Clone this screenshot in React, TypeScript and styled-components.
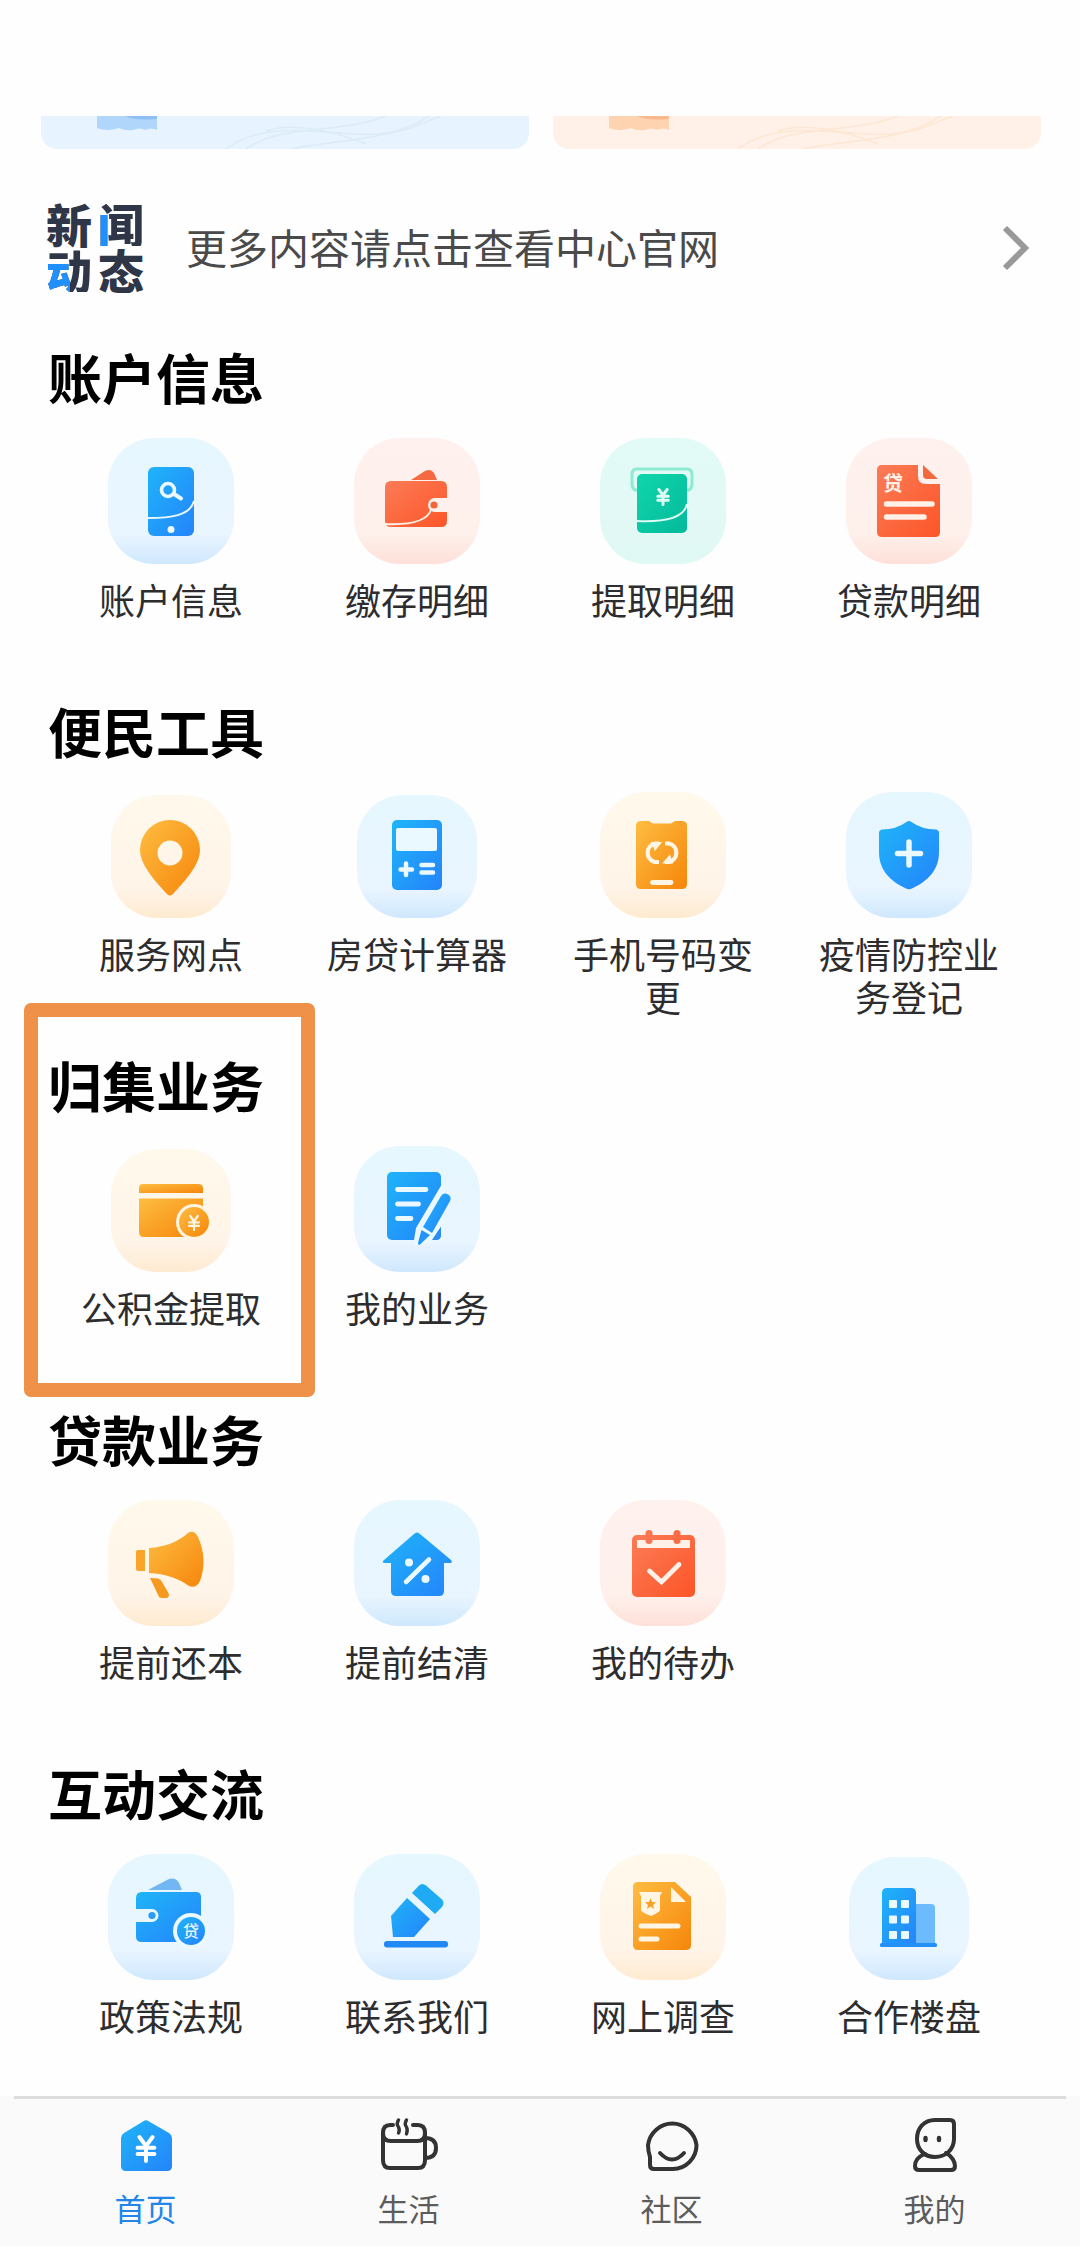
import React from 'react';
import styled, { createGlobalStyle } from 'styled-components';

const GlobalStyle = createGlobalStyle`
  *, *::before, *::after { box-sizing: border-box; }
  body {
    margin: 0;
    background: #fefefe;
    color: #2d2d2f;
    font-family: "Noto Sans CJK SC", "Noto Sans", sans-serif;
  }
  h2 { margin: 0; }
  a { color: inherit; text-decoration: none; }
`;

type Tone = 'blue' | 'red' | 'green' | 'orange';

const tileBackground: Record<Tone, string> = {
  blue: 'linear-gradient(180deg, #e6f7fe 0%, #e9f5ff 76%, #cfe8fd 100%)',
  red: 'linear-gradient(180deg, #fff1ee 0%, #fef0eb 76%, #fee0d9 100%)',
  green: 'linear-gradient(180deg, #e2fbf7 0%, #e2f8f5 76%, #dff9f4 100%)',
  orange: 'linear-gradient(180deg, #fff9ec 0%, #fff4e8 76%, #feead0 100%)',
};

const tileInk: Record<Tone, string> = {
  blue: '#eaf8ff',
  red: '#fff0e8',
  green: '#defbf5',
  orange: '#fff5e4',
};

const Page = styled.div`
  display: flex;
  flex-direction: column;
  min-height: 100vh;
  padding-top: 116px;
`;

const Banners = styled.div`
  display: grid;
  grid-template-columns: 1fr 1fr;
  gap: 24px;
  padding: 0 39px 0 41px;
`;

const Banner = styled.a<{ $tone: 'blue' | 'orange' }>`
  display: block;
  height: 33px;
  overflow: hidden;
  border-radius: 0 0 16px 16px;
  background: ${({ $tone }) => ($tone === 'blue' ? '#e7f3fe' : '#fff1e7')};
  svg { display: block; }
`;

const NewsRow = styled.a`
  display: flex;
  align-items: center;
  gap: 38px;
  padding: 51px 50px 51px 46px;
`;

const NewsLogo = styled.span`
  display: grid;
  grid-template-columns: 52px 50px;
  padding-bottom: 4px;
  font-size: 46px;
  line-height: 46px;
  font-weight: 900;
  color: #2f3648;
`;

const TwoTone = styled.span<{ $width: string; $height: string }>`
  color: transparent;
  background:
    linear-gradient(#2090ff, #2090ff) 0 100% / ${({ $width }) => $width} ${({ $height }) => $height} no-repeat,
    #2f3648;
  background-clip: text;
  -webkit-background-clip: text;
`;

const NewsText = styled.span`
  flex: 1;
  padding-bottom: 4px;
  font-size: 41px;
  line-height: 56px;
  color: #4a4a4a;
`;

const Main = styled.main`
  flex: 1;
`;

const Section = styled.section`
  position: relative;
  padding-bottom: 37px;
  &:last-child { padding-bottom: 10px; }
`;

const SectionTitle = styled.h2`
  padding: 0 48px;
  font-size: 54px;
  line-height: 60px;
  font-weight: 700;
  color: #000;
`;

const Grid = styled.div`
  display: grid;
  grid-template-columns: repeat(4, 1fr);
  padding: 31px 48px 0;
`;

const Item = styled.a`
  display: flex;
  flex-direction: column;
  align-items: center;
  gap: 14px;
  padding: 0 28px;
`;

const TileSlot = styled.span`
  display: flex;
  align-items: flex-end;
  justify-content: center;
  width: 126px;
  height: 126px;
`;

const Tile = styled.span<{ $tone: Tone; $small?: boolean }>`
  display: flex;
  align-items: flex-end;
  justify-content: center;
  width: ${({ $small }) => ($small ? 120 : 126)}px;
  height: ${({ $small }) => ($small ? 123 : 126)}px;
  border-radius: 46px;
  background: ${({ $tone }) => tileBackground[$tone]};
  svg { flex: none; display: block; }
`;

const Label = styled.span`
  min-height: 86px;
  font-size: 36px;
  line-height: 43px;
  text-align: center;
`;

const Highlight = styled.div`
  position: absolute;
  top: -52px;
  bottom: 12px;
  left: 24px;
  width: 291px;
  border: 14px solid #f0914a;
  border-radius: 7px;
  pointer-events: none;
`;

const TabBar = styled.nav`
  display: grid;
  grid-template-columns: repeat(4, 1fr);
  padding: 0 14px;
  background: #fafafa;
`;

const TabRule = styled.div`
  height: 3px;
  grid-column: 1 / -1;
  background: #dcdcdc;
  margin: 0 0 17px;
`;

const Tab = styled.a<{ $active?: boolean }>`
  display: flex;
  flex-direction: column;
  align-items: center;
  gap: 12px;
  padding-bottom: 18px;
  font-size: 31px;
  line-height: 40px;
  color: ${({ $active }) => ($active ? '#2186e8' : '#5c5c5c')};
  svg { display: block; }
`;

const HiddenDefs = styled.svg`
  position: absolute;
`;

const Gradients = () => (
  <HiddenDefs width="0" height="0" aria-hidden="true">
    <defs>
      <linearGradient id="blue" x1="0" y1="0" x2="1" y2="1">
        <stop offset="0" stopColor="#1fb4f8" />
        <stop offset="1" stopColor="#2484fb" />
      </linearGradient>
      <linearGradient id="red" x1="0" y1="0" x2="1" y2="1">
        <stop offset="0" stopColor="#fb7c57" />
        <stop offset="1" stopColor="#fd5527" />
      </linearGradient>
      <linearGradient id="green" x1="0" y1="0" x2="1" y2="1">
        <stop offset="0" stopColor="#10d6ac" />
        <stop offset="1" stopColor="#04b99a" />
      </linearGradient>
      <linearGradient id="orange" x1="0" y1="0" x2="1" y2="1">
        <stop offset="0" stopColor="#fdbd42" />
        <stop offset="1" stopColor="#f6860a" />
      </linearGradient>
    </defs>
  </HiddenDefs>
);

const Glyph = ({ x, y, size, fill, weight = 700, children }: {
  x: number; y: number; size: number; fill: string; weight?: number; children: string;
}) => (
  <text
    x={x} y={y} fontSize={size} fill={fill} fontWeight={weight} textAnchor="middle"
    fontFamily='"Noto Sans CJK SC", sans-serif'
  >
    {children}
  </text>
);

/* ¥ sign drawn with strokes, centred on (x, y) */
const Yen = ({ x, y, s, color, w }: { x: number; y: number; s: number; color: string; w: number }) => (
  <path
    transform={`translate(${x} ${y})`}
    d={`M${-s * 0.55} ${-s} L0 ${-s * 0.25} L${s * 0.55} ${-s} M0 ${-s * 0.25} V${s} M${-s * 0.7} ${-s * 0.1} H${s * 0.7} M${-s * 0.7} ${s * 0.42} H${s * 0.7}`}
    fill="none" stroke={color} strokeWidth={w} strokeLinecap="round" strokeLinejoin="round"
  />
);

const B = tileInk.blue;
const R = tileInk.red;
const G = tileInk.green;
const O = tileInk.orange;

const art = {
  phoneSearch: (
    <>
      <rect x="40" y="29" width="46" height="69" rx="6" fill="url(#blue)" />
      <path d="M40 80 C62 80 82 78 86 63" fill="none" stroke={B} strokeWidth="2" />
      <circle cx="60" cy="52" r="6.5" fill="none" stroke={B} strokeWidth="3.6" />
      <path d="M66 56 L73 60.500" stroke={B} strokeWidth="4" strokeLinecap="round" />
      <circle cx="63" cy="91.500" r="3.5" fill={B} />
    </>
  ),
  wallet: (
    <>
      <path d="M57 42 L71 33 Q77 30 80 35 L83 42 Z" fill="#f4693f" />
      <path d="M37 43 H87 Q93 43 93 49 V60 H81 A7 7 0 0 0 81 74 H93 V83 Q93 89 87 89 H37 Q31 89 31 83 V49 Q31 43 37 43 Z" fill="url(#red)" />
      <path d="M31 86 C52 87 72 85 77 72" fill="none" stroke={R} strokeWidth="2" />
      <circle cx="80" cy="67" r="3.6" fill="#f4653a" />
    </>
  ),
  withdraw: (
    <>
      <path d="M37 52 H35 Q32 50 32 46 V36 Q32 31 37 31 H87 Q92 31 92 36 V46 Q92 50 89 52 H87" fill="none" stroke="#8cebd2" strokeWidth="3" />
      <rect x="37" y="36" width="50" height="59" rx="5" fill="url(#green)" />
      <path d="M37 83 C60 84 84 82 87 66" fill="none" stroke={G} strokeWidth="2" />
      <Yen x={63} y={59} s={7.5} color={G} w={3} />
    </>
  ),
  loanDoc: (
    <>
      <path d="M36 27 H72 V38 Q72 46 80 46 H94 V94 Q94 99 89 99 H36 Q31 99 31 94 V32 Q31 27 36 27 Z" fill="url(#red)" />
      <path d="M77 27 L92 41 H81 Q77 41 77 37 Z" fill="#f4683e" />
      <Glyph x={47} y={53} size={20} fill={R}>贷</Glyph>
      <path d="M40.500 66 H86 M40.500 79 H78" stroke={R} strokeWidth="5.5" strokeLinecap="round" />
    </>
  ),
  pin: (
    <path fillRule="evenodd" d="M62 28 A30 30 0 0 1 92 58 C92 74 74 92 65 102 Q62 105 59 102 C50 92 32 74 32 58 A30 30 0 0 1 62 28 Z M62 48.500 A12.500 12.500 0 1 0 62 73.500 A12.500 12.500 0 1 0 62 48.500 Z" fill="url(#orange)" />
  ),
  calculator: (
    <>
      <rect x="38" y="28" width="50" height="70" rx="5" fill="url(#blue)" />
      <rect x="42" y="36" width="41" height="23" rx="2" fill={B} />
      <path d="M46.500 77.500 H58 M52 71.500 V83 M67.500 73 H79 M67.500 80.500 H79" stroke={B} strokeWidth="4.500" strokeLinecap="round" />
    </>
  ),
  phoneSwap: (
    <>
      <path d="M41 29 H49 L53 31.500 H71 L75 29 H82 Q87 29 87 34 V92 Q87 97 82 97 H41 Q36 97 36 92 V34 Q36 29 41 29 Z" fill="url(#orange)" />
      <path d="M59 51.500 H55 A9.500 9.500 0 0 0 55 70 H59 M65 51.500 H69 A9.500 9.500 0 0 1 69 70 H65" fill="none" stroke={O} strokeWidth="4.200" />
      <path d="M51 50 H62 L55 59 Z M73 71.500 H62 L70 62.500 Z" fill={O} />
      <path d="M52.500 90.500 H71" stroke={O} strokeWidth="4.800" strokeLinecap="round" />
    </>
  ),
  shield: (
    <>
      <path d="M60.500 30 Q63 28 65.500 30 Q76 37.500 90 37.500 Q93 38 93 41 V60 C93 78 82 89 66 96.500 Q63 98 60 96.500 C44 89 33 78 33 60 V41 Q33 38 36 37.500 Q50 37.500 60.500 30 Z" fill="url(#blue)" />
      <path d="M51.500 61.500 H74.500 M63 50 V73" stroke={B} strokeWidth="5.500" strokeLinecap="round" />
    </>
  ),
  fundCard: (
    <>
      <path d="M35 38 H90 Q95 38 95 42 V47 H31 V42 Q31 38 35 38 Z" fill="url(#orange)" />
      <path d="M31 52.500 H95 V86 Q95 91 90 91 H36 Q31 91 31 86 Z" fill="url(#orange)" />
      <circle cx="86" cy="76" r="18" fill={O} />
      <circle cx="86" cy="76" r="15" fill="url(#orange)" />
      <Yen x={86} y={77} s={7} color={O} w={2.2} />
    </>
  ),
  myDoc: (
    <>
      <rect x="33" y="26" width="54" height="68" rx="5" fill="url(#blue)" />
      <path d="M43.500 43.500 H72 M43.500 58 H64.500 M43.500 72.500 H57" stroke={B} strokeWidth="4.800" strokeLinecap="round" />
      <path d="M88 38 L62 82 L59 100 L76 97 L90 76 V38 Z" fill={B} />
      <path d="M87 82 V89 Q87 94 82 94 H79 Z" fill="#2b8df0" />
      <path d="M87 50 Q90 46 94 48.500 Q98 51 96 55 L78 87 L69 81 Z" fill="url(#blue)" />
      <path d="M67.500 84 L76 89 L65.500 99 Q64 99 64 97 Z" fill="#2294f9" />
    </>
  ),
  megaphone: (
    <>
      <path d="M30 50 H37 V71 H30 Q28 71 28 69 V52 Q28 50 30 50 Z" fill="#f9a52a" />
      <path d="M41 48 C58 47 71 41 80 33 Q86 29 90 37 C97 52 97 68 92 81 Q88 89 81 86 C70 78 58 74 41 73 Z" fill="url(#orange)" />
      <path d="M42 78 L50 78.500 Q53 79 54 82 L61 94 Q61 98 58 98 H54 Q51 98 50 95 Q46 86 42 78 Z" fill="#f59a1f" />
    </>
  ),
  housePercent: (
    <>
      <path d="M60 34 Q63 31 66 34 L97 60 Q99 63 96 63 H90 V91 Q90 96 85 96 H42 Q37 96 37 91 V63 H31 Q27 63 30 60 Z" fill="url(#blue)" />
      <circle cx="55" cy="62.500" r="4" fill={B} />
      <circle cx="71.500" cy="79" r="4" fill={B} />
      <path d="M75 59.500 L52 82" stroke={B} strokeWidth="4.600" strokeLinecap="round" />
    </>
  ),
  calendar: (
    <>
      <rect x="32" y="35" width="63" height="62" rx="5" fill="url(#red)" />
      <rect x="37" y="40" width="53" height="8" fill={R} />
      <rect x="45.500" y="30" width="7" height="14" rx="3.500" fill="#fa7550" />
      <rect x="73.500" y="30" width="7" height="14" rx="3.500" fill="#f96c45" />
      <path d="M49.500 71 L61.500 82 L79 64.500" fill="none" stroke={R} strokeWidth="4.800" strokeLinecap="round" />
    </>
  ),
  walletLoan: (
    <>
      <path d="M40 36 L59 26 Q67 22 71 29 L74 36 Z" fill="#72b6f4" />
      <path d="M34 38 H88 Q93 38 93 43 V83 Q93 88 88 88 H34 Q28 88 28 83 V68 H44 A6.500 6.500 0 0 0 44 55 H28 V44 Q28 38 34 38 Z" fill="url(#blue)" />
      <circle cx="44" cy="61.500" r="3.600" fill="#2a9df8" />
      <circle cx="83" cy="77" r="18" fill={B} />
      <circle cx="83" cy="77" r="14" fill="url(#blue)" />
      <Glyph x={83} y={82.500} size={16} fill={B} weight={500}>贷</Glyph>
    </>
  ),
  editPen: (
    <>
      <path d="M58 39 L65 31.500 Q68 28.500 72 31.500 L88 45.500 Q91 49 88 53 L81 60 Z" fill="#1eabf4" />
      <path d="M53 44 L76 65 L60 83 H39 L37 62 Z" fill="url(#blue)" />
      <rect x="30" y="87" width="64" height="6.500" rx="3" fill="#2189f3" />
    </>
  ),
  survey: (
    <>
      <path d="M38 28 H75 L91 43 V91 Q91 96 86 96 H38 Q33 96 33 91 V33 Q33 28 38 28 Z" fill="url(#orange)" />
      <path d="M71 33 L86 48 H71 Z" fill={O} />
      <path d="M39 38 H62 L60 42 V56 Q60 58 51 62 Q41 58 41 56 V42 Z" fill={O} />
      <path d="M50.500 44 L52 48 L56 48.200 L53 51 L54 55 L50.500 52.500 L47 55 L48 51 L45 48.200 L49 48 Z" fill="#f7a127" />
      <path d="M41 72 H78 M41 85 H57" stroke={O} strokeWidth="5" strokeLinecap="round" />
    </>
  ),
  building: (
    <>
      <path d="M70 50 H85 Q89 50 89 54 V90 H70 Z" fill="#6cbcfd" />
      <path d="M41 34 H65 Q70 34 70 39 V90 H36 V39 Q36 34 41 34 Z" fill="url(#blue)" />
      {[46, 61.500, 77].map((y) =>
        [43, 55].map((x) => <rect key={`${x}-${y}`} x={x} y={y} width="8" height="8" rx="1" fill={B} />),
      )}
      <rect x="34" y="89" width="57" height="4" rx="1.500" fill="#2490fb" />
    </>
  ),
};

interface Entry {
  label: string;
  tone: Tone;
  icon: keyof typeof art;
  small?: boolean;
}

const sections: { title: string; highlighted?: boolean; items: Entry[] }[] = [
  {
    title: '账户信息',
    items: [
      { label: '账户信息', tone: 'blue', icon: 'phoneSearch' },
      { label: '缴存明细', tone: 'red', icon: 'wallet' },
      { label: '提取明细', tone: 'green', icon: 'withdraw' },
      { label: '贷款明细', tone: 'red', icon: 'loanDoc' },
    ],
  },
  {
    title: '便民工具',
    items: [
      { label: '服务网点', tone: 'orange', icon: 'pin', small: true },
      { label: '房贷计算器', tone: 'blue', icon: 'calculator', small: true },
      { label: '手机号码变更', tone: 'orange', icon: 'phoneSwap' },
      { label: '疫情防控业务登记', tone: 'blue', icon: 'shield' },
    ],
  },
  {
    title: '归集业务',
    highlighted: true,
    items: [
      { label: '公积金提取', tone: 'orange', icon: 'fundCard', small: true },
      { label: '我的业务', tone: 'blue', icon: 'myDoc' },
    ],
  },
  {
    title: '贷款业务',
    items: [
      { label: '提前还本', tone: 'orange', icon: 'megaphone' },
      { label: '提前结清', tone: 'blue', icon: 'housePercent' },
      { label: '我的待办', tone: 'red', icon: 'calendar' },
    ],
  },
  {
    title: '互动交流',
    items: [
      { label: '政策法规', tone: 'blue', icon: 'walletLoan' },
      { label: '联系我们', tone: 'blue', icon: 'editPen' },
      { label: '网上调查', tone: 'orange', icon: 'survey' },
      { label: '合作楼盘', tone: 'blue', icon: 'building', small: true },
    ],
  },
];

const line = {
  fill: 'none',
  stroke: '#333',
  strokeWidth: 4,
  strokeLinecap: 'round' as const,
  strokeLinejoin: 'round' as const,
};

const tabs = [
  {
    label: '首页',
    icon: (
      <>
        <path d="M27 5.500 Q30 3 33 5.500 L53 17 Q56 19 56 22 V50 Q56 55 51 55 H10 Q5 55 5 50 V22 Q5 19 8 17 Z" fill="url(#blue)" />
        <Yen x={30} y={33} s={12} color="#fff" w={4} />
      </>
    ),
  },
  {
    label: '生活',
    icon: (
      <g {...line}>
        <path d="M14 9 H11 Q4 9 4 17 V44 Q4 52 11 52 H39 Q46 52 46 44 V17 Q46 9 39 9 H34" />
        <path d="M4 17 Q4 25 12 25 H38 Q46 25 46 17" />
        <path d="M46 22 Q57 22 57 32 Q57 42 46 42" />
        <path d="M19.500 4 Q17 8 19.500 11 Q21 14 19.500 17 M27.500 4 Q25 8 27.500 11 Q29 14 27.500 18" strokeWidth="3.400" />
      </g>
    ),
  },
  {
    label: '社区',
    icon: (
      <g {...line}>
        <path d="M12 53 Q8 53 8 49 V41 Q6 35 6 29 A24.500 25 0 0 1 54.500 29 C54.500 42 44 53 31 53 Z" />
        <path d="M18 37 Q30 50 42 37" />
      </g>
    ),
  },
  {
    label: '我的',
    icon: (
      <g {...line}>
        <path d="M30 4 H45 Q49 4 49 8 V23 C49 34 40 41 30 41 C19 41 12 33 12 23 C12 12 19 4 30 4 Z" />
        <path d="M20 38 C12 41 10 46 10 50 Q10 54 14 54 H46 Q50 54 50 50 C50 46 47 40 41 37" />
        <path d="M20.500 22 V24 M34 22 V24" strokeWidth="4.400" />
      </g>
    ),
  },
];

const BannerArt = ({ block, detail, stroke }: { block: string; detail: string; stroke: string }) => (
  <svg width="488" height="33" viewBox="0 0 488 33" aria-hidden="true">
    <path d="M56 0 H116 V14 Q110 11 104 14 Q98 11 92 14 Q84 15 78 12 Q66 16 56 12 Z" fill={block} />
    <path d="M84 0 Q94 5 116 3 V0 Z" fill={detail} />
    <g fill="none" stroke={stroke} strokeWidth="1.500">
      <path d="M185 33 C230 0 290 22 340 18 C372 15 380 6 400 0" />
      <path d="M205 33 C240 8 300 18 345 0" />
      <path d="M225 15 C250 6 290 14 325 28" />
      <path d="M250 33 C290 24 350 26 388 0" />
    </g>
  </svg>
);

export default function App() {
  return (
    <Page>
      <GlobalStyle />
      <Gradients />
      <Banners>
        <Banner href="#" $tone="blue" aria-label="banner">
          <BannerArt block="#b0d6fb" detail="#8fc0f4" stroke="#dbebf7" />
        </Banner>
        <Banner href="#" $tone="orange" aria-label="banner">
          <BannerArt block="#fed3b0" detail="#f9b98c" stroke="#fde6d3" />
        </Banner>
      </Banners>
      <NewsRow href="#">
        <NewsLogo>
          <span>新</span>
          <TwoTone $width="21%" $height="72%">闻</TwoTone>
          <TwoTone $width="47%" $height="66%">动</TwoTone>
          <span>态</span>
        </NewsLogo>
        <NewsText>更多内容请点击查看中心官网</NewsText>
        <svg width="28" height="46" viewBox="0 0 28 46" aria-hidden="true">
          <path d="M3 3 L23 23 L3 43" fill="none" stroke="#999" strokeWidth="6" />
        </svg>
      </NewsRow>
      <Main>
        {sections.map((section) => (
          <Section key={section.title}>
            <SectionTitle>{section.title}</SectionTitle>
            <Grid>
              {section.items.map((item) => (
                <Item href="#" key={item.label}>
                  <TileSlot>
                    <Tile $tone={item.tone} $small={item.small}>
                      <svg width="126" height="126" viewBox="0 0 126 126" aria-hidden="true">
                        {art[item.icon]}
                      </svg>
                    </Tile>
                  </TileSlot>
                  <Label>{item.label}</Label>
                </Item>
              ))}
            </Grid>
            {section.highlighted && <Highlight />}
          </Section>
        ))}
      </Main>
      <TabBar>
        <TabRule />
        {tabs.map((tab, index) => (
          <Tab href="#" key={tab.label} $active={index === 0}>
            <svg width="60" height="60" viewBox="0 0 60 60" aria-hidden="true">{tab.icon}</svg>
            {tab.label}
          </Tab>
        ))}
      </TabBar>
    </Page>
  );
}
